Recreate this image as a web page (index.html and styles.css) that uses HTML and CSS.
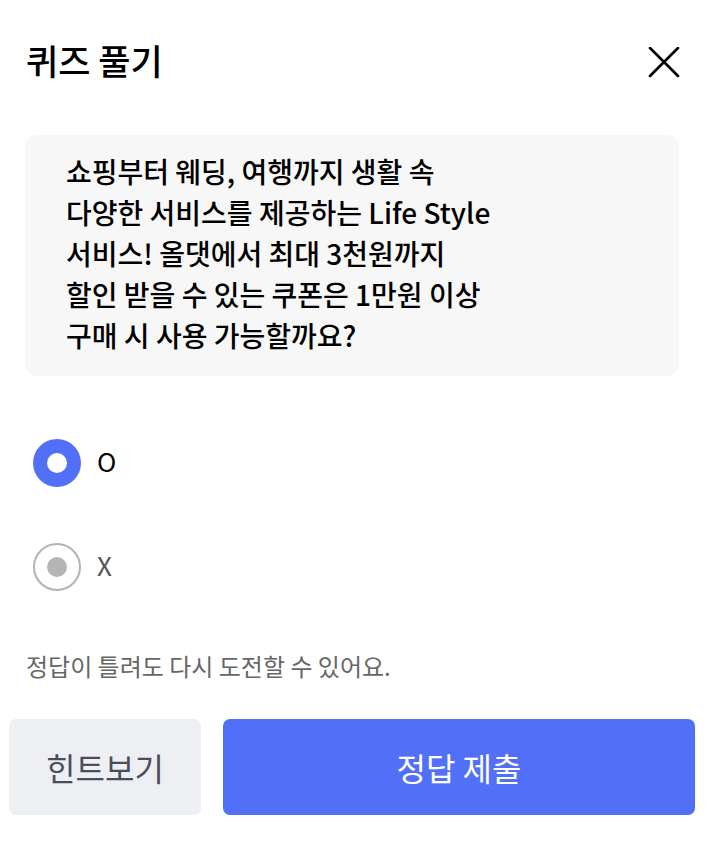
FILE: index.html
```html
<html>
	<head>
		<meta charset="utf-8">
		<title>퀴즈 풀기</title>
		<link rel="stylesheet" href="styles.css">
	</head>
	<body>
<div class="quiz">
	<div class="quiz-head">
		<h1 class="quiz-title">퀴즈 풀기</h1>
		<button class="close" type="button" aria-label="닫기">
			<svg width="32" height="32" viewBox="0 0 32 32"><path d="M2 1 L30 29 M30 1 L2 29" stroke="#000" stroke-width="2.6" stroke-linecap="round" fill="none"/></svg>
		</button>
	</div>

	<div class="question">
		쇼핑부터 웨딩, 여행까지 생활 속<br>
		다양한 서비스를 제공하는 Life Style<br>
		서비스! 올댓에서 최대 3천원까지<br>
		할인 받을 수 있는 쿠폰은 1만원 이상<br>
		구매 시 사용 가능할까요?
	</div>

	<div class="options">
		<label class="option checked"><span class="radio"></span><span class="option-label">O</span></label>
		<label class="option"><span class="radio"></span><span class="option-label">X</span></label>
	</div>

	<p class="notice">정답이 틀려도 다시 도전할 수 있어요.</p>

	<div class="actions">
		<button class="btn btn-hint" type="button">힌트보기</button>
		<button class="btn btn-submit" type="button">정답 제출</button>
	</div>
</div>
	</body>
</html>
```

FILE: styles.css
```css
BODY {
	margin: 0;
	background: #fff;
	font-family: "Noto Sans CJK KR", "Noto Sans", sans-serif;
	color: #000;
	}
.quiz-head {
	display: flex;
	align-items: center;
	justify-content: space-between;
	height: 48px;
	padding: 39px 41px 0 26px;
	}
.quiz-title {
	margin: -6px 0 0;
	font-size: 35px;
	font-weight: 500;
	line-height: 48px;
	}
.close {
	background: none;
	border: 0;
	padding: 0;
	width: 32px;
	height: 32px;
	}
.close svg { display: block; }

.question {
	margin: 48px 42px 0 25px;
	padding: 16px 20px 20px 41px;
	background: #f7f7f7;
	border-radius: 12px;
	font-size: 28px;
	font-weight: 500;
	line-height: 41px;
	white-space: nowrap;
	}

.options {
	display: flex;
	flex-direction: column;
	gap: 56px;
	margin: 63px 0 0 33px;
	}
.option {
	display: flex;
	align-items: center;
	gap: 16px;
	height: 48px;
	}
.radio {
	box-sizing: border-box;
	display: flex;
	align-items: center;
	justify-content: center;
	width: 48px;
	height: 48px;
	border: 2px solid #b3b3b3;
	border-radius: 50%;
	background: #fff;
	}
.radio::after {
	content: "";
	width: 20px;
	height: 20px;
	border-radius: 50%;
	background: #b5b5b5;
	}
.option.checked .radio {
	border: 0;
	background: #5170f7;
	}
.option.checked .radio::after { background: #fff; }
.option-label {
	font-size: 26px;
	line-height: 32px;
	margin-top: -5px;
	color: #555;
	}
.option.checked .option-label { color: #000; }

.notice {
	margin: 58px 0 0 26px;
	font-size: 24px;
	line-height: 33px;
	color: #666;
	}

.actions {
	display: flex;
	gap: 22px;
	margin-top: 37px;
	padding: 0 26px 0 9px;
	}
.btn {
	height: 96px;
	border: 0;
	border-radius: 7px;
	font-family: inherit;
	font-size: 32px;
	font-weight: 400;
	}
.btn-hint {
	width: 192px;
	background: #eeeff3;
	color: #4b4d5c;
	}
.btn-submit {
	flex: 1;
	background: #5170f7;
	color: #fff;
	}
```
